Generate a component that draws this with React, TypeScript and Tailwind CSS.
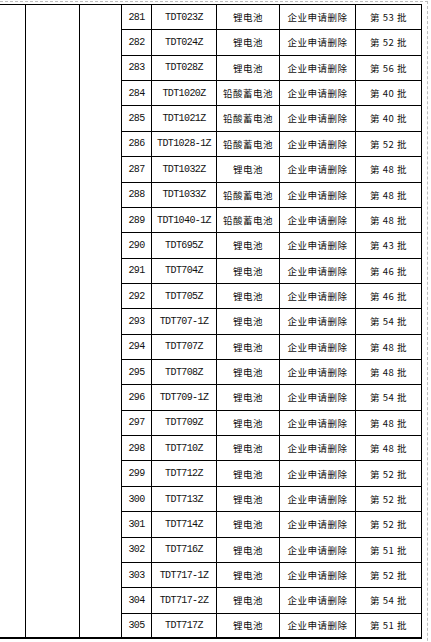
import React from "react";

const rows: [string, string, string, string][] = [
  ["281", "TDT023Z", "锂电池", "53"],
  ["282", "TDT024Z", "锂电池", "52"],
  ["283", "TDT028Z", "锂电池", "56"],
  ["284", "TDT1020Z", "铅酸蓄电池", "40"],
  ["285", "TDT1021Z", "铅酸蓄电池", "40"],
  ["286", "TDT1028-1Z", "铅酸蓄电池", "52"],
  ["287", "TDT1032Z", "锂电池", "48"],
  ["288", "TDT1033Z", "铅酸蓄电池", "48"],
  ["289", "TDT1040-1Z", "铅酸蓄电池", "48"],
  ["290", "TDT695Z", "锂电池", "43"],
  ["291", "TDT704Z", "锂电池", "46"],
  ["292", "TDT705Z", "锂电池", "46"],
  ["293", "TDT707-1Z", "锂电池", "54"],
  ["294", "TDT707Z", "锂电池", "48"],
  ["295", "TDT708Z", "锂电池", "48"],
  ["296", "TDT709-1Z", "锂电池", "54"],
  ["297", "TDT709Z", "锂电池", "48"],
  ["298", "TDT710Z", "锂电池", "48"],
  ["299", "TDT712Z", "锂电池", "52"],
  ["300", "TDT713Z", "锂电池", "52"],
  ["301", "TDT714Z", "锂电池", "52"],
  ["302", "TDT716Z", "锂电池", "51"],
  ["303", "TDT717-1Z", "锂电池", "52"],
  ["304", "TDT717-2Z", "锂电池", "54"],
  ["305", "TDT717Z", "锂电池", "51"],
];

const mono = "font-['Liberation_Mono',monospace] text-[10px] tracking-[-0.6px] text-[#111]";
const cjk = "font-['Noto_Sans_CJK_SC',sans-serif] text-[9.5px] tracking-[0.5px] text-[#111]";

export default function App() {
  return (
    <div className="w-[431px] h-[642px] bg-white overflow-hidden">
      <div className="mt-[1px] w-[428px] h-[700px] border-t border-r border-dashed border-[#bdbdbd] pt-[2px]">
        <div className="w-[422px] h-[635px] grid grid-cols-[26px_54px_42px_30px_65px_63px_76px_66px] grid-rows-[repeat(25,minmax(0,1fr))] border-t border-black">
          <div className="border-r border-b-2 border-black" style={{ gridRow: "1 / 26", gridColumn: "1" }} />
          <div className="border-r border-b-2 border-black" style={{ gridRow: "1 / 26", gridColumn: "2" }} />
          <div className="border-r border-b-2 border-black" style={{ gridRow: "1 / 26", gridColumn: "3" }} />
          {rows.map(([n, model, type, batch], i) => {
            const last = i === rows.length - 1;
            const b = last ? "border-b-2" : "border-b";
            return (
              <React.Fragment key={n}>
                <div className={`col-start-4 border-r ${b} border-black flex items-center justify-center ${mono}`}>{n}</div>
                <div className={`border-r ${b} border-black flex items-center justify-center ${mono}`}>{model}</div>
                <div className={`border-r ${b} border-black flex items-center justify-center ${cjk}`}>{type}</div>
                <div className={`border-r ${b} border-black flex items-center justify-center ${cjk}`}>企业申请删除</div>
                <div className={`border-r ${b} border-black flex items-center justify-center ${cjk}`}>第 {batch} 批</div>
              </React.Fragment>
            );
          })}
        </div>
      </div>
    </div>
  );
}
